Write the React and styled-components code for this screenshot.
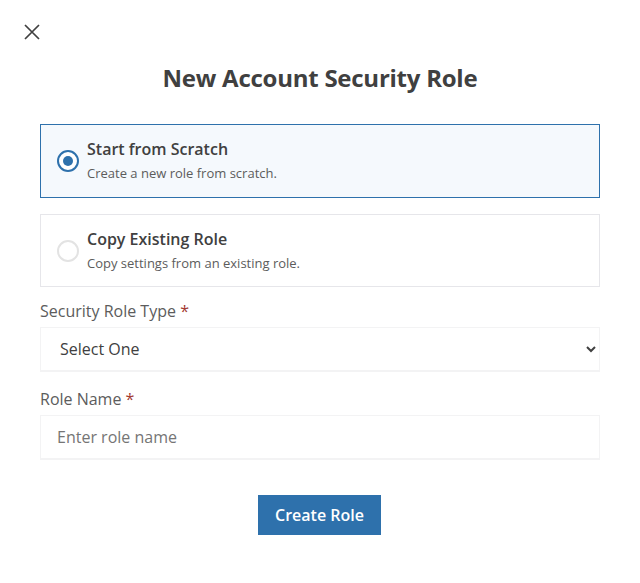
import React from "react";
import styled, { createGlobalStyle } from "styled-components";

const Global = createGlobalStyle`
  html, body { margin: 0; padding: 0; background: #fff; }
  body { font-family: "Open Sans", "Liberation Sans", sans-serif; color: #404040; }
  * { box-sizing: border-box; }
`;

const Page = styled.div`
  width: 640px;
  height: 583px;
  padding: 23px 40px 0;
  display: flex;
  flex-direction: column;
`;

const CloseButton = styled.button`
  width: 16px;
  height: 16px;
  margin: 1px 0 0 -16px;
  padding: 0;
  border: 0;
  background: none;
  display: block;
  color: #404040;
`;

const Title = styled.h1`
  margin: 20px 0 28px;
  font-size: 24px;
  line-height: 36px;
  font-weight: 700;
  letter-spacing: -0.25px;
  text-align: center;
  color: #404040;
`;

const Options = styled.div`
  display: flex;
  flex-direction: column;
  gap: 16px;
`;

const Option = styled.label`
  display: flex;
  align-items: center;
  gap: 8px;
  height: ${(p) => (p.$selected ? "74px" : "73px")};
  padding: 0 16px;
  border: 1px solid ${(p) => (p.$selected ? "#2e71ac" : "#e6e6ea")};
  background: ${(p) => (p.$selected ? "#f5f9fd" : "#fff")};
`;

const Radio = styled.span`
  flex: none;
  width: 22px;
  height: 22px;
  border-radius: 50%;
  border: 2px solid ${(p) => (p.$selected ? "#2e71ac" : "#e3e3e3")};
  background: #fff;
  display: flex;
  align-items: center;
  justify-content: center;
`;

const RadioDot = styled.span`
  width: 10px;
  height: 10px;
  border-radius: 50%;
  background: #2e71ac;
`;

const OptionText = styled.span`
  display: flex;
  flex-direction: column;
  gap: 4px;
  padding-bottom: 2px;
`;

const OptionTitle = styled.span`
  font-size: 16px;
  line-height: 22px;
  font-weight: 600;
  color: #404040;
`;

const OptionHint = styled.span`
  font-size: 13px;
  line-height: 18px;
  color: #5c5c5c;
`;

const Field = styled.div`
  margin-top: ${(p) => p.$top}px;
  display: flex;
  flex-direction: column;
  gap: 5px;
`;

const Label = styled.label`
  font-size: 16px;
  line-height: 22px;
  color: #5c5c5c;
`;

const Star = styled.span`
  color: #a33a32;
`;

const Select = styled.select`
  width: 100%;
  height: 45px;
  padding: 0 0 0 15px;
  border: 1px solid #f3f3f4;
  border-bottom-width: 2px;
  background: #fff;
  font: 400 16px "Open Sans", sans-serif;
  color: #404040;
  outline: none;
`;

const Input = styled.input`
  width: 100%;
  height: 45px;
  padding: 0 16px;
  border: 1px solid #f3f3f4;
  border-bottom-width: 2px;
  background: #fff;
  font: 400 16px "Open Sans", sans-serif;
  color: #404040;
  outline: none;
  &::placeholder { color: #757575; opacity: 1; }
`;

const Actions = styled.div`
  margin-top: 35px;
  display: flex;
  justify-content: center;
`;

const Submit = styled.button`
  width: 123px;
  height: 40px;
  margin-left: -1px;
  border: 0;
  background: #2e71ac;
  color: #fff;
  font: 600 16px "Open Sans", sans-serif;
`;

export default function App() {
  return (
    <Page>
      <Global />
      <CloseButton aria-label="Close">
        <svg width="16" height="16" viewBox="0 0 16 16" fill="none" stroke="currentColor" strokeWidth="1.7">
          <path d="M1 1l14 14M15 1L1 15" />
        </svg>
      </CloseButton>
      <Title>New Account Security Role</Title>
      <Options>
        <Option $selected>
          <Radio $selected><RadioDot /></Radio>
          <OptionText>
            <OptionTitle>Start from Scratch</OptionTitle>
            <OptionHint>Create a new role from scratch.</OptionHint>
          </OptionText>
        </Option>
        <Option>
          <Radio />
          <OptionText>
            <OptionTitle>Copy Existing Role</OptionTitle>
            <OptionHint>Copy settings from an existing role.</OptionHint>
          </OptionText>
        </Option>
      </Options>
      <Field $top={13}>
        <Label>Security Role Type <Star>*</Star></Label>
        <Select defaultValue="">
          <option value="">Select One</option>
        </Select>
      </Field>
      <Field $top={16}>
        <Label>Role Name <Star>*</Star></Label>
        <Input placeholder="Enter role name" />
      </Field>
      <Actions>
        <Submit>Create Role</Submit>
      </Actions>
    </Page>
  );
}
